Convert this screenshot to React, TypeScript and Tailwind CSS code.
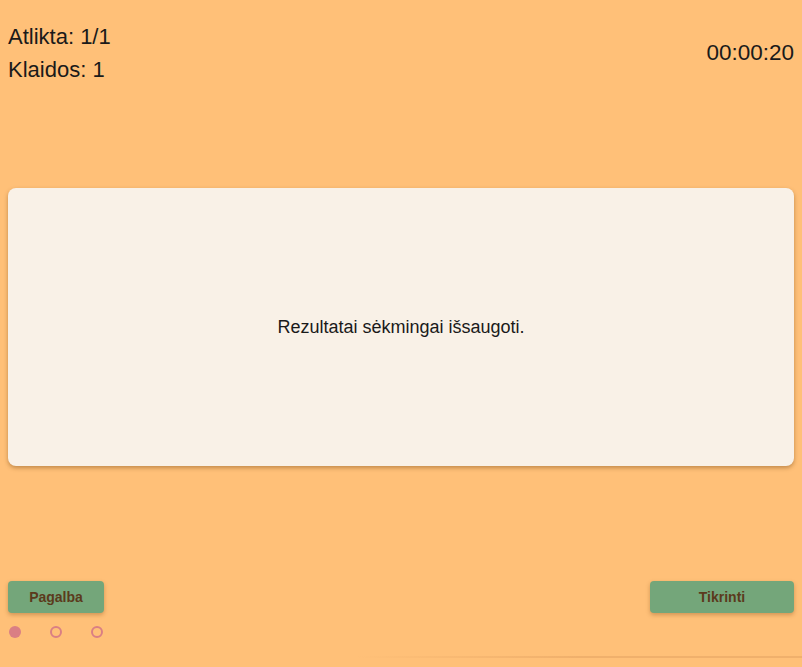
export default function App() {
  return (
    <div
      className="w-[802px] h-[667px] bg-[#ffc078] flex flex-col overflow-hidden text-[#1a1a1a]"
      style={{ fontFamily: '"Liberation Sans", Arial, sans-serif' }}
    >
      <div className="flex justify-between px-2 pt-[24px]">
        <div className="flex flex-col gap-[7px] text-[22px] leading-[26px]">
          <span>Atlikta: 1/1</span>
          <span>Klaidos: 1</span>
        </div>
        <span className="text-[22.5px] leading-[26px] mt-[16px]">00:00:20</span>
      </div>

      <div className="mx-2 mt-[105px] h-[278px] rounded-lg bg-[#f9f1e7] shadow-[0_2px_4px_rgba(120,70,20,0.45)] flex items-center justify-center">
        <p className="text-[18px]">Rezultatai sėkmingai išsaugoti.</p>
      </div>

      <div className="flex justify-between px-2 mt-[115px]">
        <button className="w-[96px] h-[32px] rounded bg-[#74a67a] text-[#5b3a1c] text-[14px] font-bold shadow-[0_2px_4px_rgba(120,70,20,0.35)]">
          Pagalba
        </button>
        <button className="w-[144px] h-[32px] rounded bg-[#74a67a] text-[#5b3a1c] text-[14px] font-bold shadow-[0_2px_4px_rgba(120,70,20,0.35)]">
          Tikrinti
        </button>
      </div>

      <div className="flex gap-[29px] pl-[9px] mt-[13px]">
        <span className="w-[12px] h-[12px] rounded-full bg-[#da7f84]" />
        <span className="w-[12px] h-[12px] rounded-full border-2 border-[#da7f84]" />
        <span className="w-[12px] h-[12px] rounded-full border-2 border-[#da7f84]" />
      </div>

      <div className="ml-[355px] mt-[18px] h-[2px] bg-gradient-to-r from-transparent via-[#f0b06c] to-[#f0b06c]" />
    </div>
  );
}
